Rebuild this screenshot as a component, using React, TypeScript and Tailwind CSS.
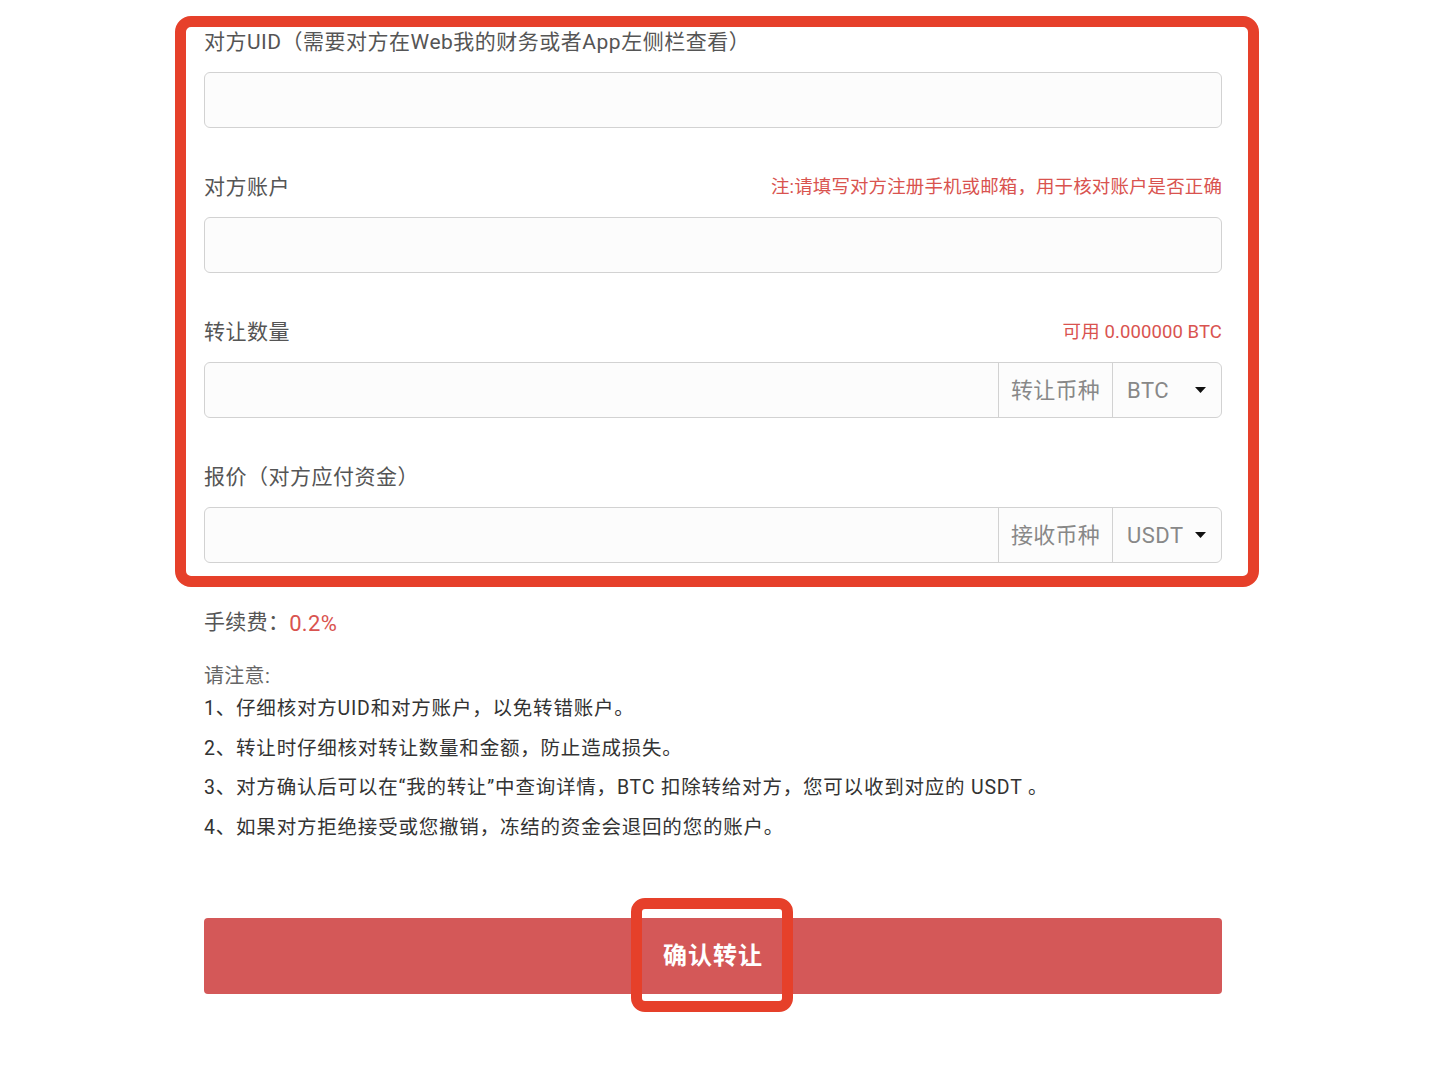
import React from "react";

const font = { fontFamily: '"Roboto", "Noto Sans CJK SC", sans-serif' };

function Caret() {
  return (
    <svg width="11" height="6" viewBox="0 0 11 6" className="block">
      <path d="M0 0 L11 0 L5.5 6 Z" fill="#111" />
    </svg>
  );
}

function Field({
  label,
  note,
  addon,
  value,
}: {
  label: string;
  note?: string;
  addon?: string;
  value?: string;
}) {
  return (
    <div className="mb-[45px]">
      <div className="flex items-center justify-between h-[30px] mb-[14px]">
        <span className="text-[21px] tracking-[0.5px] text-[#555]">{label}</span>
        {note && <span className="text-[18.5px] tracking-[0.1px] text-[#d9534f]">{note}</span>}
      </div>
      <div className="flex h-[56px] rounded-[6px] border border-[#d2d2d2] bg-[#fcfcfc] overflow-hidden">
        <div className="flex-1" />
        {addon && (
          <>
            <div className="w-[114px] border-l border-[#d2d2d2] flex items-center justify-center text-[22px] tracking-[0.3px] text-[#888]">
              {addon}
            </div>
            <div className="w-[109px] border-l border-[#d2d2d2] flex items-center justify-between pl-[14px] pr-[15px] text-[22px] tracking-[0.5px] text-[#888]">
              <span>{value}</span>
              <Caret />
            </div>
          </>
        )}
      </div>
    </div>
  );
}

export default function App() {
  return (
    <div className="relative min-h-[1072px] w-[1434px] bg-white" style={font}>
      <div className="ml-[204px] w-[1018px] pt-[28px]">
        <Field label="对方UID（需要对方在Web我的财务或者App左侧栏查看）" />
        <Field label="对方账户" note="注:请填写对方注册手机或邮箱，用于核对账户是否正确" />
        <Field label="转让数量" note="可用 0.000000 BTC" addon="转让币种" value="BTC" />
        <Field label="报价（对方应付资金）" addon="接收币种" value="USDT" />

        <div className="h-[30px] flex items-center text-[21px] tracking-[0.3px] text-[#555]">
          手续费：<span className="text-[22px] text-[#d9534f]">0.2%</span>
        </div>
        <div className="mt-[24px] h-[27px] flex items-center text-[20px] tracking-[0.3px] text-[#666]">请注意:</div>
        <ul className="text-[19.5px] tracking-[0.8px] text-[#333]">
          <li className="h-[39.5px] flex items-center">1、仔细核对方UID和对方账户，以免转错账户。</li>
          <li className="h-[39.5px] flex items-center">2、转让时仔细核对转让数量和金额，防止造成损失。</li>
          <li className="h-[39.5px] flex items-center">3、对方确认后可以在“我的转让”中查询详情，BTC 扣除转给对方，您可以收到对应的 USDT 。</li>
          <li className="h-[39.5px] flex items-center">4、如果对方拒绝接受或您撤销，冻结的资金会退回的您的账户。</li>
        </ul>

        <button className="mt-[71px] w-full h-[76px] rounded-[4px] bg-[#d45858] text-white text-[24px] tracking-[1px] font-bold">
          确认转让
        </button>
      </div>

      <div className="pointer-events-none absolute left-[175px] top-[16px] w-[1084px] h-[571px] rounded-[16px] border-[11px] border-[#e6402a]" />
      <div className="pointer-events-none absolute left-[631px] top-[898px] w-[162px] h-[114px] rounded-[14px] border-[11px] border-[#e6402a]" />
    </div>
  );
}
